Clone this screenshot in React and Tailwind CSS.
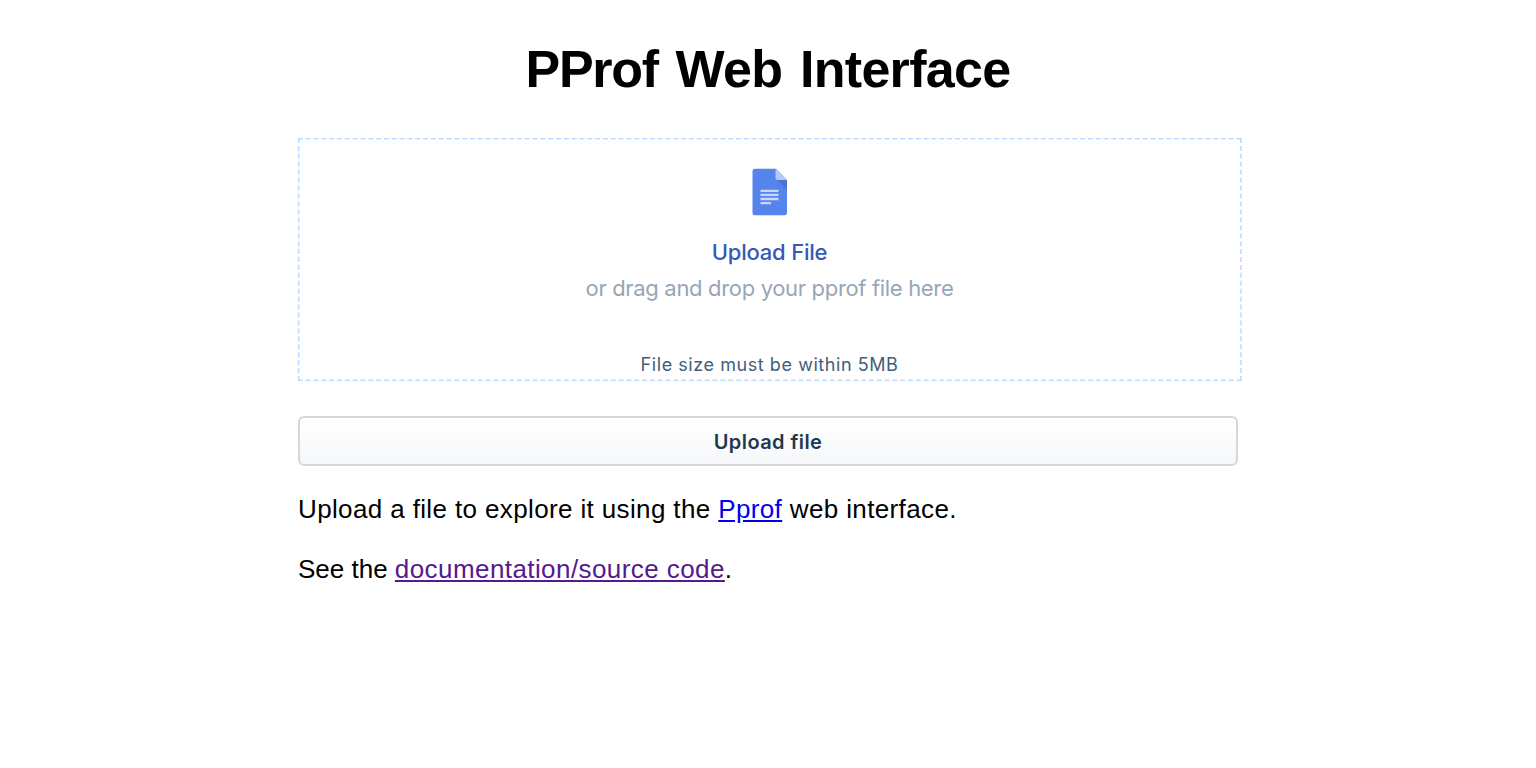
function FileIcon() {
  return (
    <svg className="block h-[48px] w-[36px]" viewBox="0 0 36 48">
      <path d="M3 .8h21L35 12v32.700a2.500 2.500 0 0 1-2.500 2.500H3A2.500 2.500 0 0 1 .5 44.700V3.300A2.500 2.500 0 0 1 3 .8z" fill="#5585ec" />
      <path d="M25 12h10v9.500z" fill="#4a72cf" />
      <path d="M23.500.8 35 12H25.500A2 2 0 0 1 23.500 10z" fill="#b3caf8" />
      <path d="M8.500 22.900h18M8.500 26.900h18M8.500 31h18M8.500 35.100h10.500" stroke="#c8d8f6" strokeWidth="2.300" />
    </svg>
  );
}

function DashedOutline() {
  return (
    <svg className="pointer-events-none absolute inset-0 h-full w-full overflow-visible" stroke="#bfdbfd" strokeWidth="1.6" fill="none" aria-hidden="true">
      <path d="M-.1 .8H943.600M-.1 242.200H943.600" strokeDasharray="5 2.822" />
      <path d="M.7 0V243M942.900 0V243" strokeDasharray="5 2.933" />
    </svg>
  );
}

export default function App() {
  return (
    <div className="h-[768px] bg-white px-[298px] pt-[36px] font-['Liberation_Sans',sans-serif] text-black">
      <h1 className="h-[68px] text-center text-[52px] leading-[67px] font-bold tracking-[-0.7px] [word-spacing:4px] whitespace-nowrap"><span className="tracking-[-1.3px]">PProf</span> Web Interface</h1>
      <div className="relative mt-[34px] flex h-[243px] w-[943px] flex-col items-center pt-[30px] font-['Inter',sans-serif]">
        <DashedOutline />
        <FileIcon />
        <div className="mt-[20px] text-[22px] leading-[32px] font-medium tracking-[-0.2px] text-[#3659b8]">Upload File</div>
        <div className="mt-[4px] text-[22px] leading-[32px] tracking-[-0.33px] text-[#98a6b5]">or drag and drop your pprof file here</div>
        <div className="mt-[49px] text-[18px] leading-[24px] tracking-[0.56px] text-[#425e7b]">File size must be within 5MB</div>
      </div>
      <button className="mt-[35px] block h-[50px] w-[940px] rounded-[6px] border-2 border-[#d2d8de] bg-linear-to-b from-white to-[#f5f7fa] pt-[1px] font-['Inter',sans-serif] text-[20px] font-semibold tracking-[0.42px] text-[#1f3850]">Upload file</button>
      <p className="mt-[25px] text-[26px] leading-[36px] tracking-[0.37px] whitespace-nowrap">Upload a file to explore it using the <a className="text-[#0000ee] underline">Pprof</a> web interface.</p>
      <p className="mt-[24px] text-[26px] leading-[36px] whitespace-nowrap">See the <a className="tracking-[0.42px] text-[#551a8b] underline">documentation/source code</a>.</p>
    </div>
  );
}
